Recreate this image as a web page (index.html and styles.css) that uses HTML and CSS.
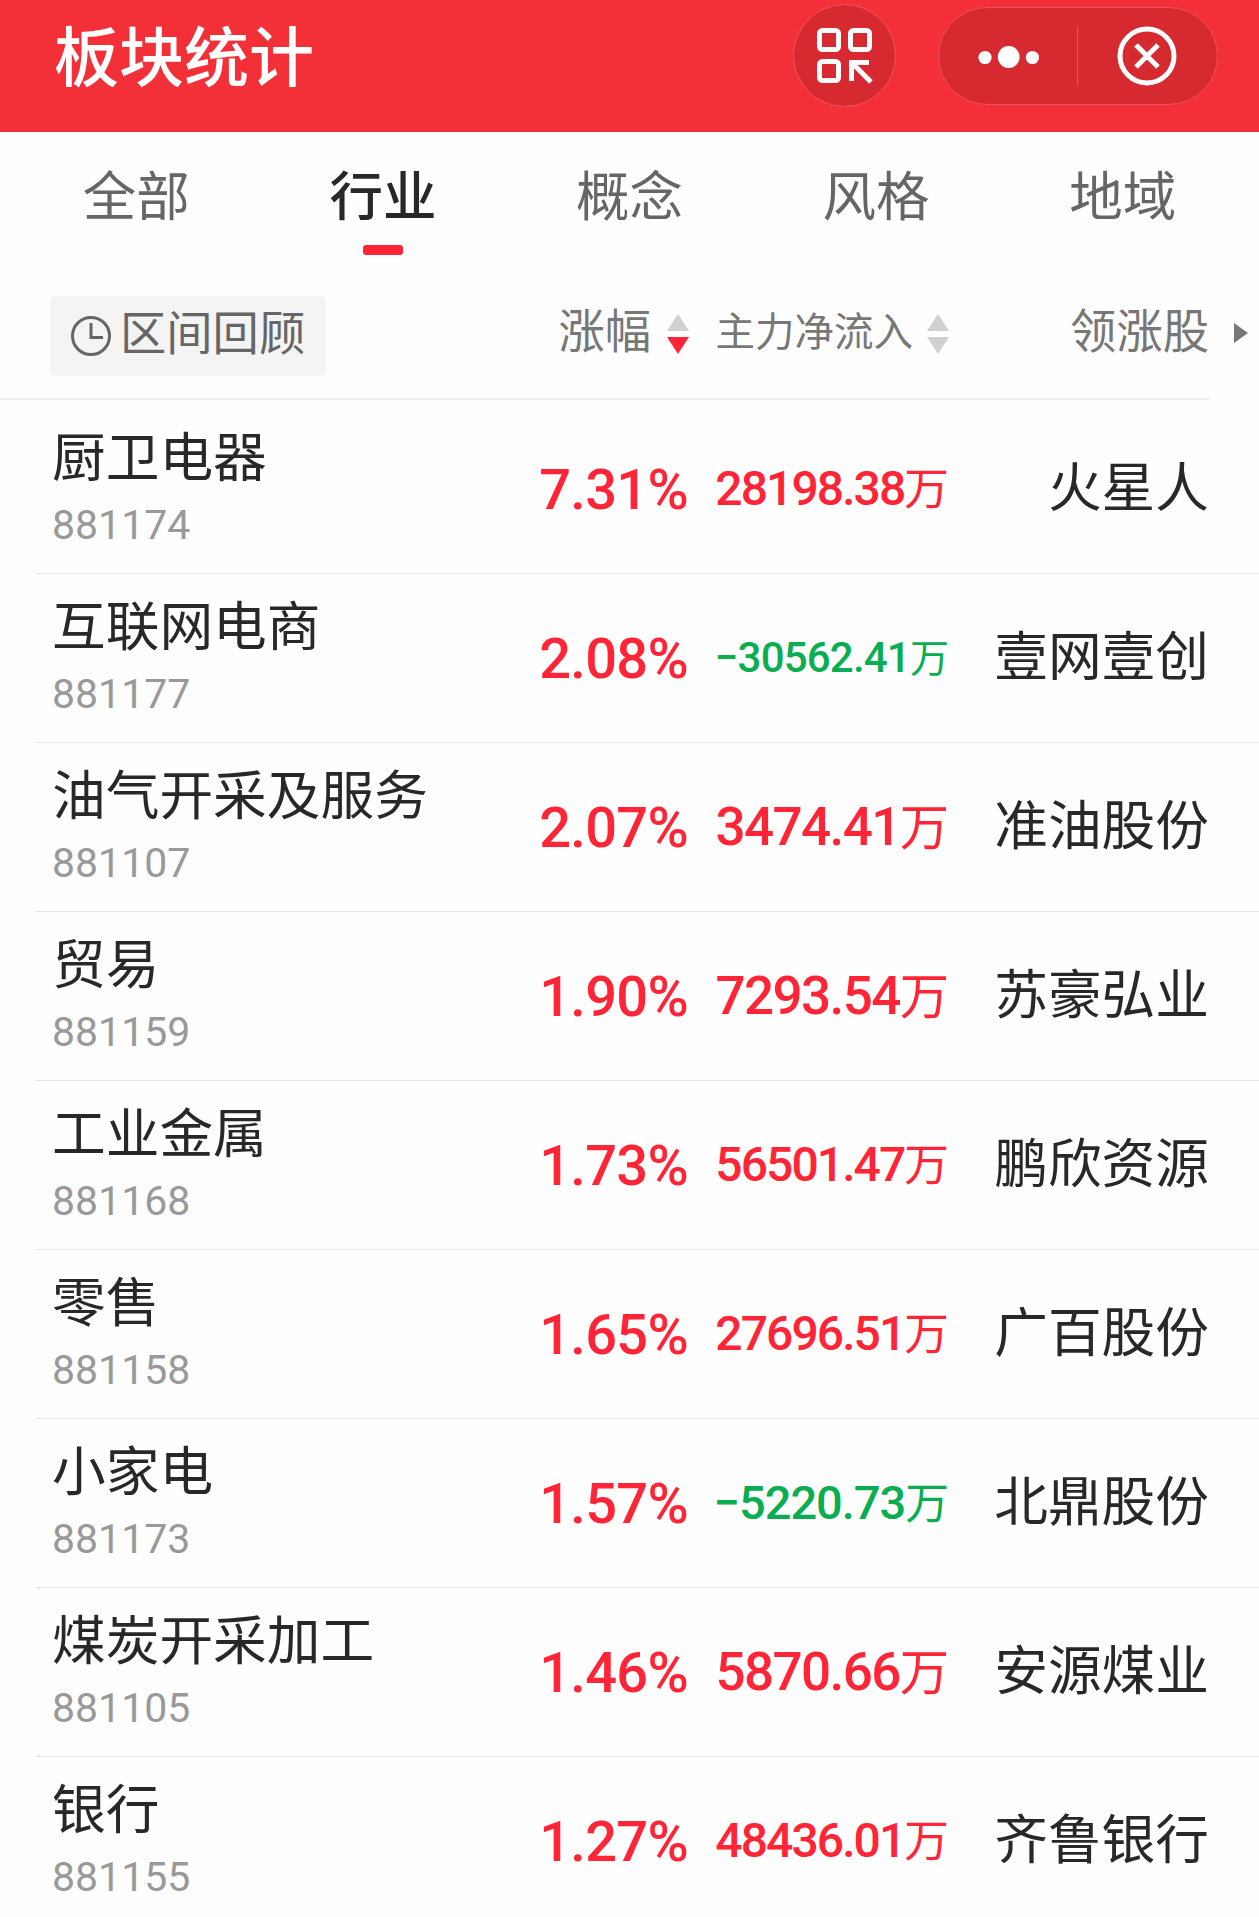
FILE: index.html
```
<!DOCTYPE html>
<html lang="zh-CN">
<head>
    <meta charset="UTF-8">
    <meta name="viewport" content="width=device-width, initial-scale=1.0">
    <title>板块统计</title>
    <link rel="stylesheet" href="styles.css">
</head>
<body>
    <header class="header">
        <h1 class="title">板块统计</h1>
        <button class="scan">
            <svg width="56" height="56" viewBox="0 0 56 56" fill="none" stroke="#fff" stroke-width="5">
                <rect x="2.5" y="2.5" width="19" height="19" rx="3"/>
                <rect x="33.5" y="2.5" width="19" height="19" rx="3"/>
                <rect x="2.5" y="33.5" width="19" height="19" rx="3"/>
                <path d="M52 34.5H34.5V53M35 35L54 54"/>
            </svg>
        </button>
        <div class="capsule">
            <svg class="dots" width="62" height="24" viewBox="0 0 62 24" fill="#fff">
                <circle cx="7" cy="12.5" r="6.6"/>
                <circle cx="30.7" cy="12" r="10.9"/>
                <circle cx="54.4" cy="12.5" r="6.6"/>
            </svg>
            <span class="divider"></span>
            <svg class="close" width="60" height="60" viewBox="0 0 60 60" fill="none" stroke="#fff" stroke-width="5">
                <circle cx="30" cy="30" r="27"/>
                <path d="M19 19L41 41M41 19L19 41"/>
            </svg>
        </div>
    </header>

    <nav class="tabs">
        <a class="tab">全部</a>
        <a class="tab active">行业</a>
        <a class="tab">概念</a>
        <a class="tab">风格</a>
        <a class="tab">地域</a>
    </nav>

    <section class="columns">
        <button class="review">
            <svg width="40" height="40" viewBox="0 0 40 40" fill="none" stroke="#666" stroke-width="3">
                <circle cx="20" cy="20" r="18.5"/>
                <path d="M20 7V21.5H32"/>
            </svg>
            <span>区间回顾</span>
        </button>
        <div class="col-rate">
            <span>涨幅</span>
            <svg class="sort" width="24" height="40" viewBox="0 0 24 40">
                <path d="M12 0L23 17H1Z" fill="#d0d0d0"/>
                <path d="M1 23H23L12 40Z" fill="#ff2436"/>
            </svg>
        </div>
        <div class="col-flow">
            <span>主力净流入</span>
            <svg class="sort" width="24" height="40" viewBox="0 0 24 40">
                <path d="M12 0L23 17H1Z" fill="#d0d0d0"/>
                <path d="M1 23H23L12 40Z" fill="#d0d0d0"/>
            </svg>
        </div>
        <div class="col-stock">领涨股</div>
        <svg class="more" width="14" height="20" viewBox="0 0 14 20"><path d="M0 0L14 10L0 20Z" fill="#777"/></svg>
    </section>

    <main class="list">
        <div class="row">
            <div class="board"><div class="name">厨卫电器</div><div class="code">881174</div></div>
            <div class="rate">7.31%</div>
            <div class="flow md">28198.38<span class="unit">万</span></div>
            <div class="stock">火星人</div>
        </div>
        <div class="row">
            <div class="board"><div class="name">互联网电商</div><div class="code">881177</div></div>
            <div class="rate">2.08%</div>
            <div class="flow sm down">−30562.41<span class="unit">万</span></div>
            <div class="stock">壹网壹创</div>
        </div>
        <div class="row">
            <div class="board"><div class="name">油气开采及服务</div><div class="code">881107</div></div>
            <div class="rate">2.07%</div>
            <div class="flow lg">3474.41<span class="unit">万</span></div>
            <div class="stock">准油股份</div>
        </div>
        <div class="row">
            <div class="board"><div class="name">贸易</div><div class="code">881159</div></div>
            <div class="rate">1.90%</div>
            <div class="flow lg">7293.54<span class="unit">万</span></div>
            <div class="stock">苏豪弘业</div>
        </div>
        <div class="row">
            <div class="board"><div class="name">工业金属</div><div class="code">881168</div></div>
            <div class="rate">1.73%</div>
            <div class="flow md">56501.47<span class="unit">万</span></div>
            <div class="stock">鹏欣资源</div>
        </div>
        <div class="row">
            <div class="board"><div class="name">零售</div><div class="code">881158</div></div>
            <div class="rate">1.65%</div>
            <div class="flow md">27696.51<span class="unit">万</span></div>
            <div class="stock">广百股份</div>
        </div>
        <div class="row">
            <div class="board"><div class="name">小家电</div><div class="code">881173</div></div>
            <div class="rate">1.57%</div>
            <div class="flow ms down">−5220.73<span class="unit">万</span></div>
            <div class="stock">北鼎股份</div>
        </div>
        <div class="row">
            <div class="board"><div class="name">煤炭开采加工</div><div class="code">881105</div></div>
            <div class="rate">1.46%</div>
            <div class="flow lg">5870.66<span class="unit">万</span></div>
            <div class="stock">安源煤业</div>
        </div>
        <div class="row">
            <div class="board"><div class="name">银行</div><div class="code">881155</div></div>
            <div class="rate">1.27%</div>
            <div class="flow md">48436.01<span class="unit">万</span></div>
            <div class="stock">齐鲁银行</div>
        </div>
    </main>
</body>
</html>
```
FILE: styles.css
```
* {
    margin: 0;
    padding: 0;
    box-sizing: border-box;
}
body {
    width: 1259px;
    height: 1917px;
    overflow: hidden;
    background: #fefefe;
    color: #282828;
    font-family: Roboto, "Noto Sans CJK SC", sans-serif;
}
button {
    border: none;
    font-family: inherit;
}
svg {
    display: block;
    flex: none;
}

/* header */
.header {
    display: flex;
    align-items: flex-start;
    height: 132px;
    padding: 4px 41px 0 54px;
    background: #f33038;
}
.title {
    flex: 1;
    margin-top: 8px;
    color: #fff;
    font-size: 65px;
    font-weight: 500;
    line-height: 94px;
}
.scan {
    display: flex;
    align-items: center;
    justify-content: center;
    width: 103px;
    height: 103px;
    margin-right: 42px;
    border: 1.5px solid #f0535c;
    border-radius: 50%;
    background: #d62a30;
}
.capsule {
    display: flex;
    align-items: center;
    width: 280px;
    height: 98px;
    margin-top: 3px;
    border: 1.5px solid #f0535c;
    border-radius: 49px;
    background: #d62a30;
}
.dots {
    margin: 2px 0 0 39px;
}
.divider {
    width: 1px;
    height: 60px;
    margin: 0 39px 0 37px;
    background: #e8525a;
}

/* tabs */
.tabs {
    display: flex;
    height: 148px;
    padding: 0 13px;
}
.tab {
    display: flex;
    flex: 1;
    flex-direction: column;
    align-items: center;
    padding-top: 26px;
    color: #666;
    font-size: 53.5px;
    line-height: 80px;
}
.active {
    color: #282828;
    font-weight: 500;
}
.active::after {
    content: "";
    width: 40px;
    height: 10px;
    margin-top: 7px;
    border-radius: 3px;
    background: #ff2436;
}

/* column titles */
.columns {
    display: flex;
    align-items: center;
    width: 1259px;
    height: 120px;
    padding: 0 0 8px 50px;
    color: #777;
    background: linear-gradient(#f0f0f0, #f0f0f0) 0 118px / 1210px 2px no-repeat;
}
.review {
    display: flex;
    align-items: center;
    gap: 9px;
    width: 276px;
    height: 80px;
    padding-left: 21px;
    border-radius: 6px;
    background: #f4f4f4;
    color: #666;
    font-size: 46.3px;
    line-height: 66px;
}
.review span {
    margin-top: -4px;
}
.col-rate,
.col-flow {
    display: flex;
    align-items: center;
    justify-content: flex-end;
}
.col-rate {
    width: 364px;
    gap: 15px;
    font-size: 46.3px;
    line-height: 66px;
}
.col-flow {
    width: 260px;
    gap: 13px;
    font-size: 39.5px;
    line-height: 60px;
}
.col-rate span,
.col-stock {
    margin-top: -8px;
}
.col-flow span {
    margin-top: -6px;
}
.col-rate .sort,
.col-flow .sort {
    margin-top: -4px;
}
.col-stock {
    width: 259px;
    font-size: 46.3px;
    line-height: 66px;
    text-align: right;
}
.more {
    margin: -6px 0 0 25px;
}

/* list */
.list {
    padding: 5px 0 0 36px;
}
.row {
    display: flex;
    height: 169px;
    padding: 0 50px 0 16px;
    border-bottom: 1px solid #e6e6e6;
}
.board {
    flex: 1;
}
.name {
    margin-top: 14px;
    font-size: 53.7px;
    line-height: 80px;
}
.code {
    margin-top: 2px;
    color: #999;
    font-size: 41px;
    line-height: 48px;
}
.rate,
.flow,
.stock {
    padding-top: 42px;
    line-height: 84px;
}
.rate {
    margin-right: 1px;
    padding-top: 43px;
    color: #ff2436;
    font-size: 56px;
    font-weight: 500;
    letter-spacing: -0.7px;
    text-align: right;
}
.flow {
    width: 260px;
    color: #ff2436;
    font-weight: 500;
    text-align: right;
    white-space: nowrap;
}
.unit {
    font-size: 0.93em;
    font-weight: 400;
    letter-spacing: 0;
}
.lg {
    font-size: 53px;
    letter-spacing: -1.6px;
}
.md {
    font-size: 48px;
    letter-spacing: -1.9px;
}
.ms {
    font-size: 47px;
    letter-spacing: -1px;
}
.sm {
    font-size: 42px;
    letter-spacing: -0.8px;
}
.down {
    color: #0aad50;
}
.stock {
    width: 260px;
    font-size: 53.7px;
    text-align: right;
}
```
